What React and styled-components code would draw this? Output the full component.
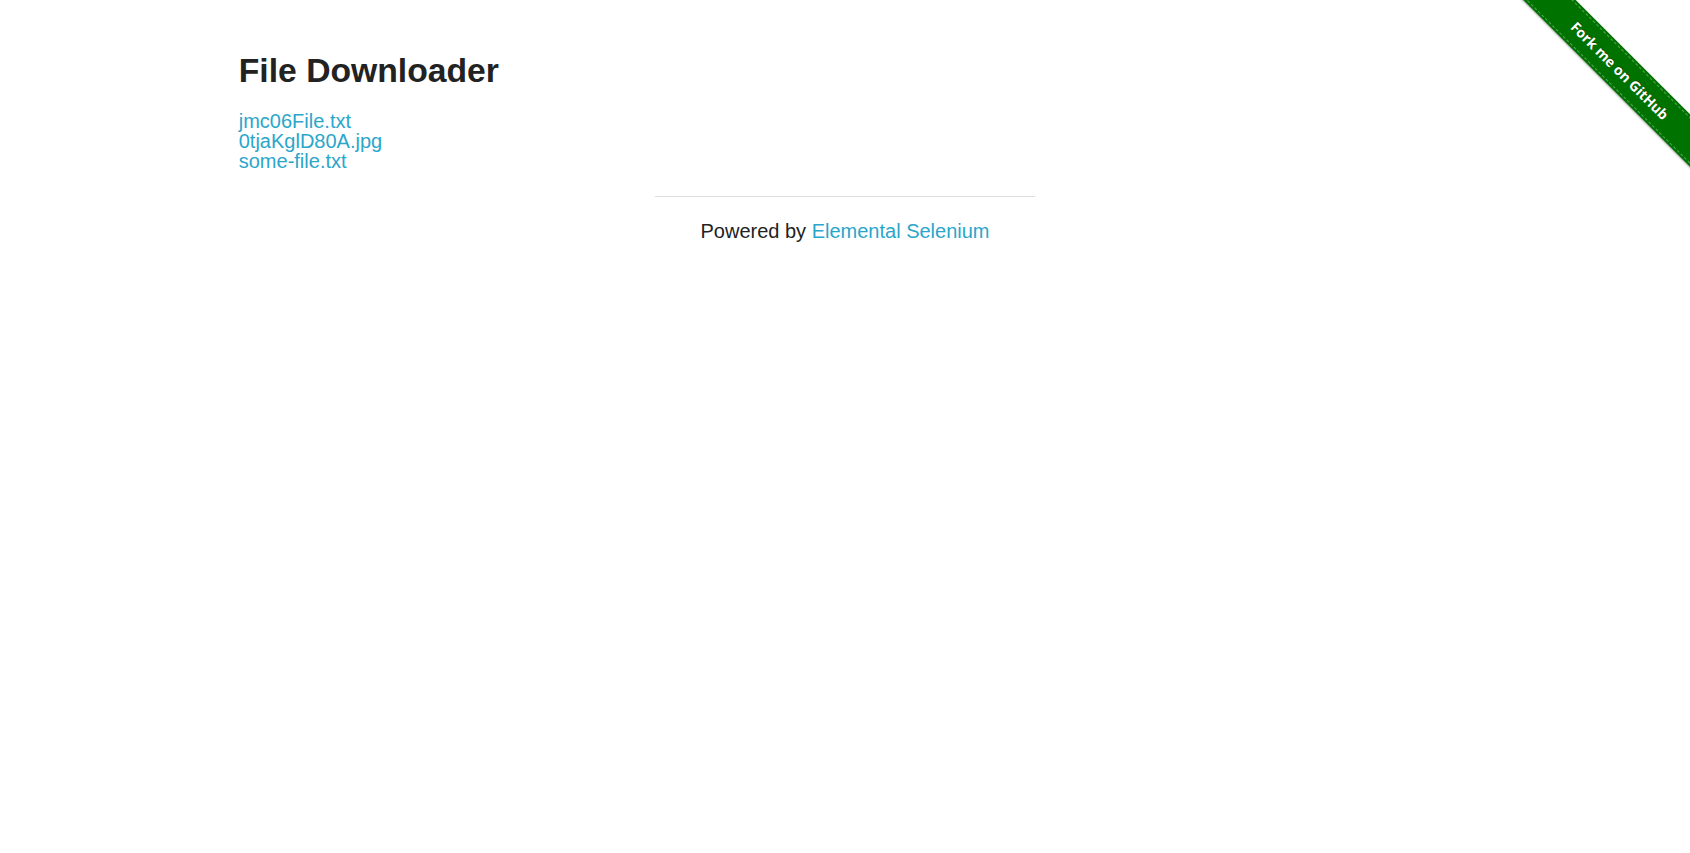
import React from 'react';
import styled, { createGlobalStyle } from 'styled-components';

const files = ['jmc06File.txt', '0tjaKglD80A.jpg', 'some-file.txt'];

const GlobalStyle = createGlobalStyle`
  html, body {
    margin: 0;
    padding: 0;
    background: #fff;
  }
  body {
    font-family: "Liberation Sans", Arial, Helvetica, sans-serif;
    color: #222;
    font-size: 20px;
  }
`;

const App = () => {
  return (
    <Page>
      <GlobalStyle />
      <ForkRibbon href="#">
        <RibbonBand>
          <RibbonText>Fork me on GitHub</RibbonText>
        </RibbonBand>
      </ForkRibbon>

      <Row>
        <Content>
          <Title>File Downloader</Title>
          <FileList>
            {files.map((name) => (
              <FileLink key={name} href="#">
                {name}
              </FileLink>
            ))}
          </FileList>
        </Content>
      </Row>

      <FooterRow>
        <FooterColumn>
          <Rule />
          <Credit>
            Powered by <CreditLink href="#">Elemental Selenium</CreditLink>
          </Credit>
        </FooterColumn>
      </FooterRow>
    </Page>
  );
};

export default App;

const Page = styled.div`
  position: relative;
  min-height: 853px;
  overflow: hidden;
`;

const Row = styled.div`
  max-width: 1250px;
  margin: 0 auto;
`;

const Content = styled.div`
  padding: 50px 18.75px 0 18.75px;
`;

const Title = styled.h3`
  margin: 0;
  font-size: 33.7px;
  line-height: 40px;
  font-weight: 700;
  color: #222;
`;

const FileList = styled.div`
  display: flex;
  flex-direction: column;
  align-items: flex-start;
  margin-top: 21px;
`;

const FileLink = styled.a`
  font-size: 20px;
  line-height: 20px;
  color: #2ba6cb;
  text-decoration: none;
`;

const FooterRow = styled.div`
  max-width: 1250px;
  margin: 0 auto;
  display: flex;
  justify-content: center;
`;

const FooterColumn = styled.div`
  width: 416.67px;
  box-sizing: border-box;
  padding: 0 18.75px;
`;

const Rule = styled.hr`
  border: 0;
  border-top: 1px solid #ddd;
  margin: 25px 0 19px 0;
  height: 0;
`;

const Credit = styled.div`
  text-align: center;
  font-size: 20px;
  line-height: 30px;
  color: #222;
`;

const CreditLink = styled.a`
  color: #2ba6cb;
  text-decoration: none;
`;

const ForkRibbon = styled.a`
  position: absolute;
  top: 0;
  right: 0;
  width: 186px;
  height: 186px;
  overflow: hidden;
  text-decoration: none;
`;

const RibbonBand = styled.div`
  position: absolute;
  left: -14.5px;
  top: 52px;
  width: 260px;
  height: 37px;
  box-sizing: border-box;
  padding: 2px 0;
  background: #007200;
  transform: rotate(45deg);
  box-shadow: 0 1px 2px rgba(0, 0, 0, 0.35);
`;

const RibbonText = styled.div`
  height: 100%;
  box-sizing: border-box;
  border-top: 1px dashed rgba(255, 255, 255, 0.35);
  border-bottom: 1px dashed rgba(255, 255, 255, 0.35);
  display: flex;
  align-items: center;
  justify-content: center;
  font-family: "Open Sans", "DejaVu Sans", sans-serif;
  font-weight: 700;
  font-size: 14px;
  color: #fff;
  text-shadow: 0 -1px 0 rgba(0, 0, 0, 0.4);
`;
